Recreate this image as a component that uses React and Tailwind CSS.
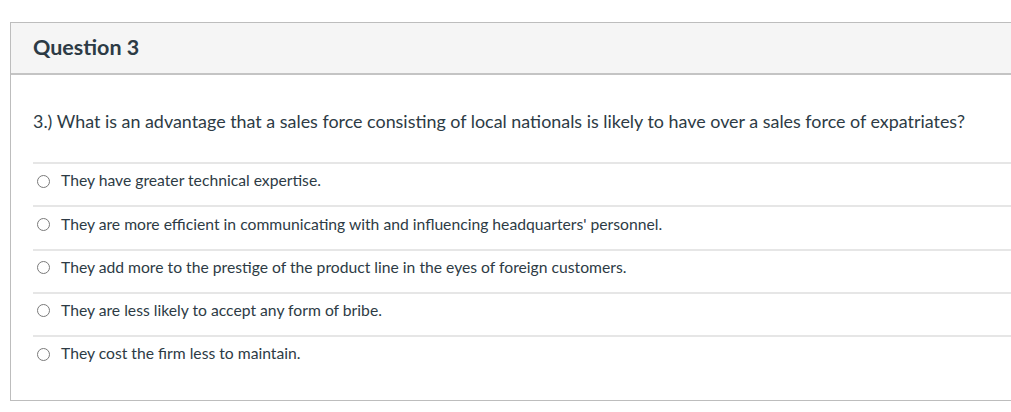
import React from "react";

const answers = [
  "They have greater technical expertise.",
  "They are more efficient in communicating with and influencing headquarters' personnel.",
  "They add more to the prestige of the product line in the eyes of foreign customers.",
  "They are less likely to accept any form of bribe.",
  "They cost the firm less to maintain.",
];

function App() {
  return (
    <div
      className="w-[1011px] h-[412px] bg-white overflow-hidden pt-[22px] pl-[10px]"
      style={{ fontFamily: "Lato, 'Liberation Sans', sans-serif" }}
    >
      <div className="w-[1020px] border border-[#bdbdbd] text-[#2d3b45]">
        <div className="h-[52px] bg-[#f5f5f5] border-b-2 border-[#c4c4c4] flex items-center pl-[22px]">
          <h2 className="text-[21.5px] font-bold leading-none">Question 3</h2>
        </div>
        <div className="pt-[33px] pb-[22px] pl-[22px]">
          <p className="text-[17.9px] leading-[27px]">
            3.) What is an advantage that a sales force consisting of local
            nationals is likely to have over a sales force of expatriates?
          </p>
          <div className="mt-[27px]">
            {answers.map((a) => (
              <label
                key={a}
                className="flex items-center h-[43.25px] border-t-2 border-[#e6e6e6] pl-[4px] pb-[7px] text-[15.7px]"
              >
                <span className="w-[13px] h-[13px] rounded-full border border-[#7a7a7a] bg-white shrink-0" />
                <span className="ml-[11px]">{a}</span>
              </label>
            ))}
          </div>
        </div>
      </div>
    </div>
  );
}

export default App;
